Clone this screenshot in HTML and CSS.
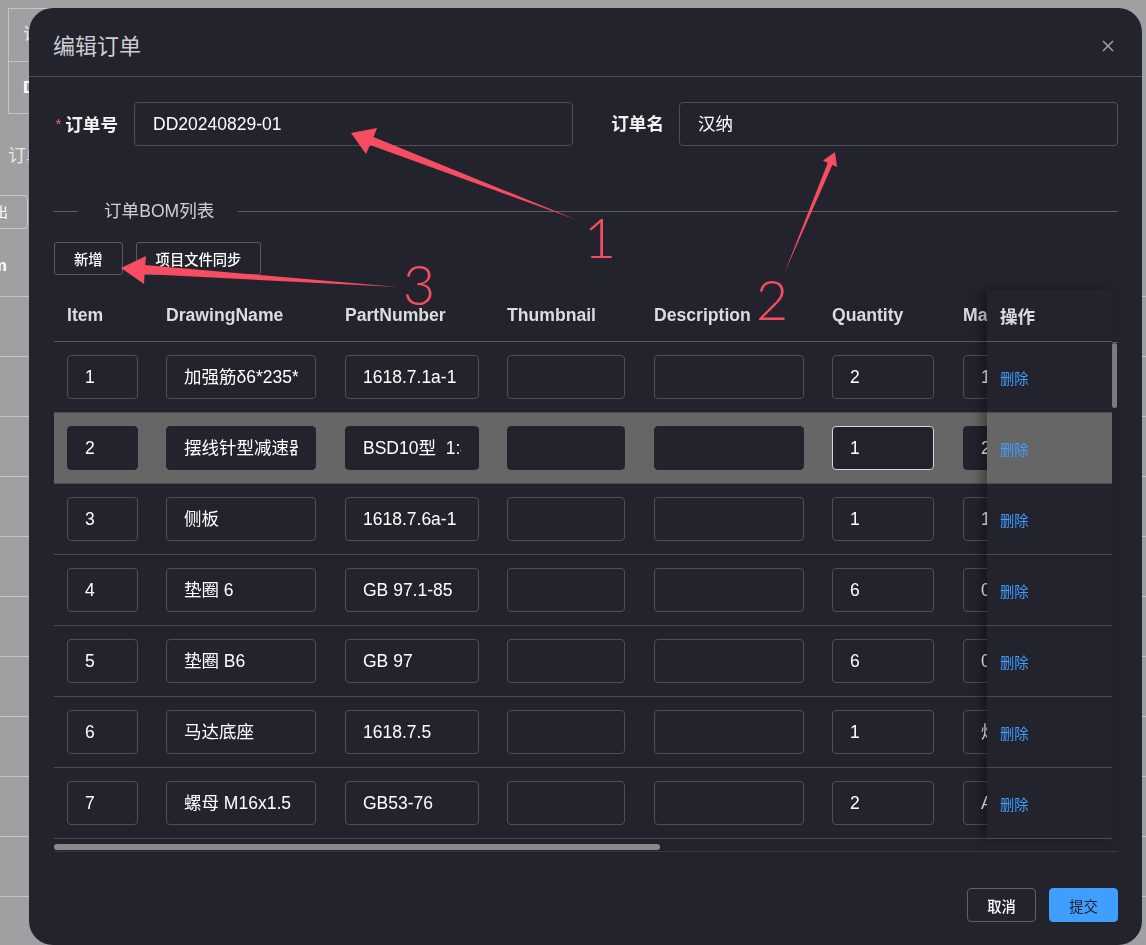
FILE: index.html
```html
<!DOCTYPE html>
<html lang="zh-CN">
<head>
<meta charset="utf-8">
<title>编辑订单</title>
<link rel="stylesheet" href="styles.css">
</head>
<body>
<div class="bg-page">
  <div class="bg-box">
    <div class="bg-box-row">订单号</div>
    <div class="bg-box-row bg-val">DD20240829-01</div>
  </div>
  <div class="bg-title">订单BOM</div>
  <div class="bg-toolbar"><span class="bg-btn">导出</span></div>
  <div class="bg-th">Item</div>
  <div class="bg-tr"></div><div class="bg-tr"></div><div class="bg-tr"></div><div class="bg-tr"></div>
  <div class="bg-tr"></div><div class="bg-tr"></div><div class="bg-tr"></div><div class="bg-tr"></div>
  <div class="bg-tr"></div><div class="bg-tr"></div><div class="bg-tr"></div>
</div>

<div class="modal">
  <div class="modal-header">
    <span class="modal-title">编辑订单</span>
    <svg class="close" viewBox="0 0 12 12"><path d="M1 1L11 11M11 1L1 11" stroke="#a9a9b0" stroke-width="1.4" fill="none"/></svg>
  </div>
  <div class="modal-body">
    <div class="form-row">
      <label class="form-label"><span class="star">*</span>订单号</label>
      <div class="inp inp-lg"><span>DD20240829-01</span></div>
      <label class="form-label label2">订单名</label>
      <div class="inp inp-lg"><span>汉纳</span></div>
    </div>
    <div class="divider"><span class="divider-text">订单BOM列表</span></div>
    <div class="toolbar">
      <button class="btn">新增</button>
      <button class="btn">项目文件同步</button>
    </div>
    <div class="table">
      <div class="table-inner">
        <div class="tmain">
          <div class="tr thead">
            <div class="td c1">Item</div><div class="td c2">DrawingName</div><div class="td c3">PartNumber</div><div class="td c4">Thumbnail</div><div class="td c5">Description</div><div class="td c6">Quantity</div><div class="td c7">Ma</div>
          </div>
          <div class="tr">
            <div class="td c1"><div class="inp i1"><span>1</span></div></div>
            <div class="td c2"><div class="inp i2"><span>加强筋δ6*235*120</span></div></div>
            <div class="td c3"><div class="inp i3"><span>1618.7.1a-1</span></div></div>
            <div class="td c4"><div class="inp i4"><span></span></div></div>
            <div class="td c5"><div class="inp i5"><span></span></div></div>
            <div class="td c6"><div class="inp i6"><span>2</span></div></div>
            <div class="td c7"><div class="inp i7"><span>1</span></div></div>
          </div>
          <div class="tr hover">
            <div class="td c1"><div class="inp i1"><span>2</span></div></div>
            <div class="td c2"><div class="inp i2"><span>摆线针型减速器</span></div></div>
            <div class="td c3"><div class="inp i3"><span>BSD10型&nbsp; 1:43</span></div></div>
            <div class="td c4"><div class="inp i4"><span></span></div></div>
            <div class="td c5"><div class="inp i5"><span></span></div></div>
            <div class="td c6"><div class="inp i6 focus"><span>1</span></div></div>
            <div class="td c7"><div class="inp i7"><span>2</span></div></div>
          </div>
          <div class="tr">
            <div class="td c1"><div class="inp i1"><span>3</span></div></div>
            <div class="td c2"><div class="inp i2"><span>侧板</span></div></div>
            <div class="td c3"><div class="inp i3"><span>1618.7.6a-1</span></div></div>
            <div class="td c4"><div class="inp i4"><span></span></div></div>
            <div class="td c5"><div class="inp i5"><span></span></div></div>
            <div class="td c6"><div class="inp i6"><span>1</span></div></div>
            <div class="td c7"><div class="inp i7"><span>1</span></div></div>
          </div>
          <div class="tr">
            <div class="td c1"><div class="inp i1"><span>4</span></div></div>
            <div class="td c2"><div class="inp i2"><span>垫圈 6</span></div></div>
            <div class="td c3"><div class="inp i3"><span>GB 97.1-85</span></div></div>
            <div class="td c4"><div class="inp i4"><span></span></div></div>
            <div class="td c5"><div class="inp i5"><span></span></div></div>
            <div class="td c6"><div class="inp i6"><span>6</span></div></div>
            <div class="td c7"><div class="inp i7"><span>0</span></div></div>
          </div>
          <div class="tr">
            <div class="td c1"><div class="inp i1"><span>5</span></div></div>
            <div class="td c2"><div class="inp i2"><span>垫圈 B6</span></div></div>
            <div class="td c3"><div class="inp i3"><span>GB 97</span></div></div>
            <div class="td c4"><div class="inp i4"><span></span></div></div>
            <div class="td c5"><div class="inp i5"><span></span></div></div>
            <div class="td c6"><div class="inp i6"><span>6</span></div></div>
            <div class="td c7"><div class="inp i7"><span>0</span></div></div>
          </div>
          <div class="tr">
            <div class="td c1"><div class="inp i1"><span>6</span></div></div>
            <div class="td c2"><div class="inp i2"><span>马达底座</span></div></div>
            <div class="td c3"><div class="inp i3"><span>1618.7.5</span></div></div>
            <div class="td c4"><div class="inp i4"><span></span></div></div>
            <div class="td c5"><div class="inp i5"><span></span></div></div>
            <div class="td c6"><div class="inp i6"><span>1</span></div></div>
            <div class="td c7"><div class="inp i7"><span>焊</span></div></div>
          </div>
          <div class="tr">
            <div class="td c1"><div class="inp i1"><span>7</span></div></div>
            <div class="td c2"><div class="inp i2"><span>螺母 M16x1.5</span></div></div>
            <div class="td c3"><div class="inp i3"><span>GB53-76</span></div></div>
            <div class="td c4"><div class="inp i4"><span></span></div></div>
            <div class="td c5"><div class="inp i5"><span></span></div></div>
            <div class="td c6"><div class="inp i6"><span>2</span></div></div>
            <div class="td c7"><div class="inp i7"><span>A</span></div></div>
          </div>
        </div>
        <div class="tfixed">
          <div class="tr thead">操作</div>
          <div class="tr"><span class="link">删除</span></div>
          <div class="tr hover"><span class="link">删除</span></div>
          <div class="tr"><span class="link">删除</span></div>
          <div class="tr"><span class="link">删除</span></div>
          <div class="tr"><span class="link">删除</span></div>
          <div class="tr"><span class="link">删除</span></div>
          <div class="tr"><span class="link">删除</span></div>
        </div>
        <div class="vscroll"><div class="vthumb"></div></div>
      </div>
      <div class="hscroll"><div class="hthumb"></div></div>
    </div>
  </div>
  <div class="modal-footer">
    <button class="btn btn-lg">取消</button>
    <button class="btn btn-lg primary">提交</button>
  </div>
</div>

<svg class="annot" viewBox="0 0 1146 945" width="1146" height="945">
  <polygon points="351,133 377,128 373.5,137 577,220 370,145 366,154" fill="#f74d62"/>
  <polygon points="835,152 837,167 832.3,165 784,274 827.7,163 823,160.5" fill="#f74d62"/>
  <polygon points="121,268 146,256 145.2,265.1 398,287 144.6,274.1 144,284" fill="#f74d62"/>
  <text x="600" y="258" class="num">1</text>
  <text x="772" y="320" class="num">2</text>
  <text x="419" y="305" class="num">3</text>
</svg>
</body>
</html>
```

FILE: styles.css
```css
* { box-sizing: border-box; }
html, body { margin: 0; height: 100%; }
body {
  background: #a0a0a2;
  font-family: "Liberation Sans", "Noto Sans CJK SC", sans-serif;
  overflow: hidden;
  position: relative;
}

/* background page (behind the overlay) */
.bg-page { padding-top: 8px; color: #e9e9e9; }
.bg-box { margin-left: 8px; width: 400px; height: 106px; border: 1px solid #c4c4c6; }
.bg-box-row { height: 52px; line-height: 52px; padding-left: 14px; font-size: 17px; }
.bg-box-row + .bg-box-row { border-top: 1px solid #c4c4c6; }
.bg-val { font-weight: bold; color: #fff; }
.bg-title { margin: 29px 0 0 8px; line-height: 26px; font-size: 18px; color: #e6e6e6; }
.bg-toolbar { margin-top: 26px; height: 34px; }
.bg-btn {
  display: inline-block; margin-left: -40px; width: 68px; height: 34px; line-height: 32px;
  border: 1px solid #c8c8ca; border-radius: 4px; text-align: center; font-size: 14px; color: #fff;
}
.bg-th { height: 67px; padding-top: 24px; line-height: 26px; margin-left: -28px; font-weight: bold; font-size: 17px; color: #fff; }
.bg-tr { height: 60px; border-top: 1px solid #c6c6c8; }

/* modal */
.modal {
  position: fixed; left: 29px; top: 8px; width: 1113px; height: 937px;
  background: #23232e; border-radius: 24px;
  display: flex; flex-direction: column; color: #fff;
}
.modal-header {
  height: 69px; padding: 24px 28px 0 24px; border-bottom: 1px solid #4b4b55;
  display: flex; justify-content: space-between; align-items: flex-start;
}
.modal-title { font-size: 22px; line-height: 30px; color: #cdcdd0; }
.close { width: 12px; height: 12px; margin-top: 8px; }

.modal-body { padding: 25px 24px 0; }

.form-row { display: flex; align-items: center; height: 44px; }
.form-label {
  width: 81px; padding-right: 16px; text-align: right; font-weight: bold;
  font-size: 17.6px; color: #f2f2f2; white-space: nowrap; line-height: 24px;
}
.label2 { width: 68px; padding-right: 15px; margin-left: 38px; }
.star { color: #f56c6c; font-size: 14px; font-weight: normal; margin-right: 4px; vertical-align: 2px; }

.inp {
  height: 44px; border: 1px solid #4f4f59; border-radius: 4px; padding: 0 17px;
  font-size: 17.5px; line-height: 42px; color: #fff; background: #23232e; white-space: nowrap;
}
.inp span { display: block; overflow: hidden; white-space: nowrap; height: 42px; }
.inp-lg { width: 439px; padding: 0 18px; }

.divider { display: flex; align-items: center; height: 24px; margin-top: 53px; }
.divider::before { content: ""; width: 25px; height: 1px; background: #5e5e68; }
.divider::after { content: ""; flex: 1; height: 1px; background: #5e5e68; }
.divider-text { padding: 0 24px 0 26px; font-size: 17.6px; line-height: 24px; color: #cfcfd2; }

.toolbar { margin-top: 19px; padding-left: 1px; display: flex; gap: 13px; }
.btn {
  height: 33px; padding: 0 19px; border: 1px solid #5a5a63; border-radius: 3px;
  background: transparent; color: #fff; font-family: inherit; font-size: 14.3px; font-weight: 500;
}

/* table */
.table { margin: 15px 0 0 1px; width: 1064px; }
.table-inner { display: flex; }
.tmain { width: 933px; overflow: hidden; }
.tr { display: flex; align-items: center; height: 71px; border-bottom: 1px solid #4b4b55; width: max-content; }
.tr.thead { height: 52px; font-weight: bold; font-size: 17.6px; color: #dcdcde; border-bottom-color: #5a5a63; }
.tr.hover { background: #666667; }
.td { flex: none; padding-left: 12px; }
.c1 { width: 100px; padding-left: 13px; }
.c2 { width: 179px; }
.c3 { width: 162px; }
.c4 { width: 147px; }
.c5 { width: 178px; }
.c6 { width: 131px; }
.c7 { width: 160px; }
.i1 { width: 71px; }
.i2 { width: 150px; }
.i3 { width: 134px; }
.i4 { width: 118px; }
.i5 { width: 150px; }
.i6 { width: 102px; }
.i7 { width: 130px; }
.hover .inp { border-color: #23232e; }
.hover .inp.focus { border-color: #d6d6d8; }

.tfixed {
  width: 125px; background: #23232e; position: relative; z-index: 1;
  box-shadow: -6px 0 10px rgba(0, 0, 0, 0.35);
}
.tfixed .tr { width: 125px; padding-left: 13px; }
.link { color: #409eff; font-size: 14.3px; }

.vscroll { width: 6px; }
.vscroll::before { content: ""; display: block; height: 52px; border-bottom: 1px solid #5a5a63; }
.vthumb { width: 5px; height: 65px; border-radius: 3px; background: #7d7d80; }

.hscroll { height: 13px; padding-top: 5px; border-bottom: 1px solid #3a3a44; }
.hthumb { width: 606px; height: 6px; border-radius: 3px; background: #8a8a8d; }

.modal-footer { margin-top: auto; padding: 0 24px 23px; display: flex; justify-content: flex-end; gap: 13px; }
.btn-lg { width: 69px; height: 34px; padding: 0; border-radius: 4px; border-color: #5f5f68; font-size: 14.3px; }
.btn-lg.primary { background: #409eff; border-color: #409eff; color: #1d1d22; font-weight: normal; }

/* screenshot annotations */
.annot { position: absolute; left: 0; top: 0; z-index: 10; pointer-events: none; }
.num { font-family: "Lato", "Open Sans", sans-serif; font-weight: 300; font-size: 56px; fill: #f74d62; text-anchor: middle; }
```
